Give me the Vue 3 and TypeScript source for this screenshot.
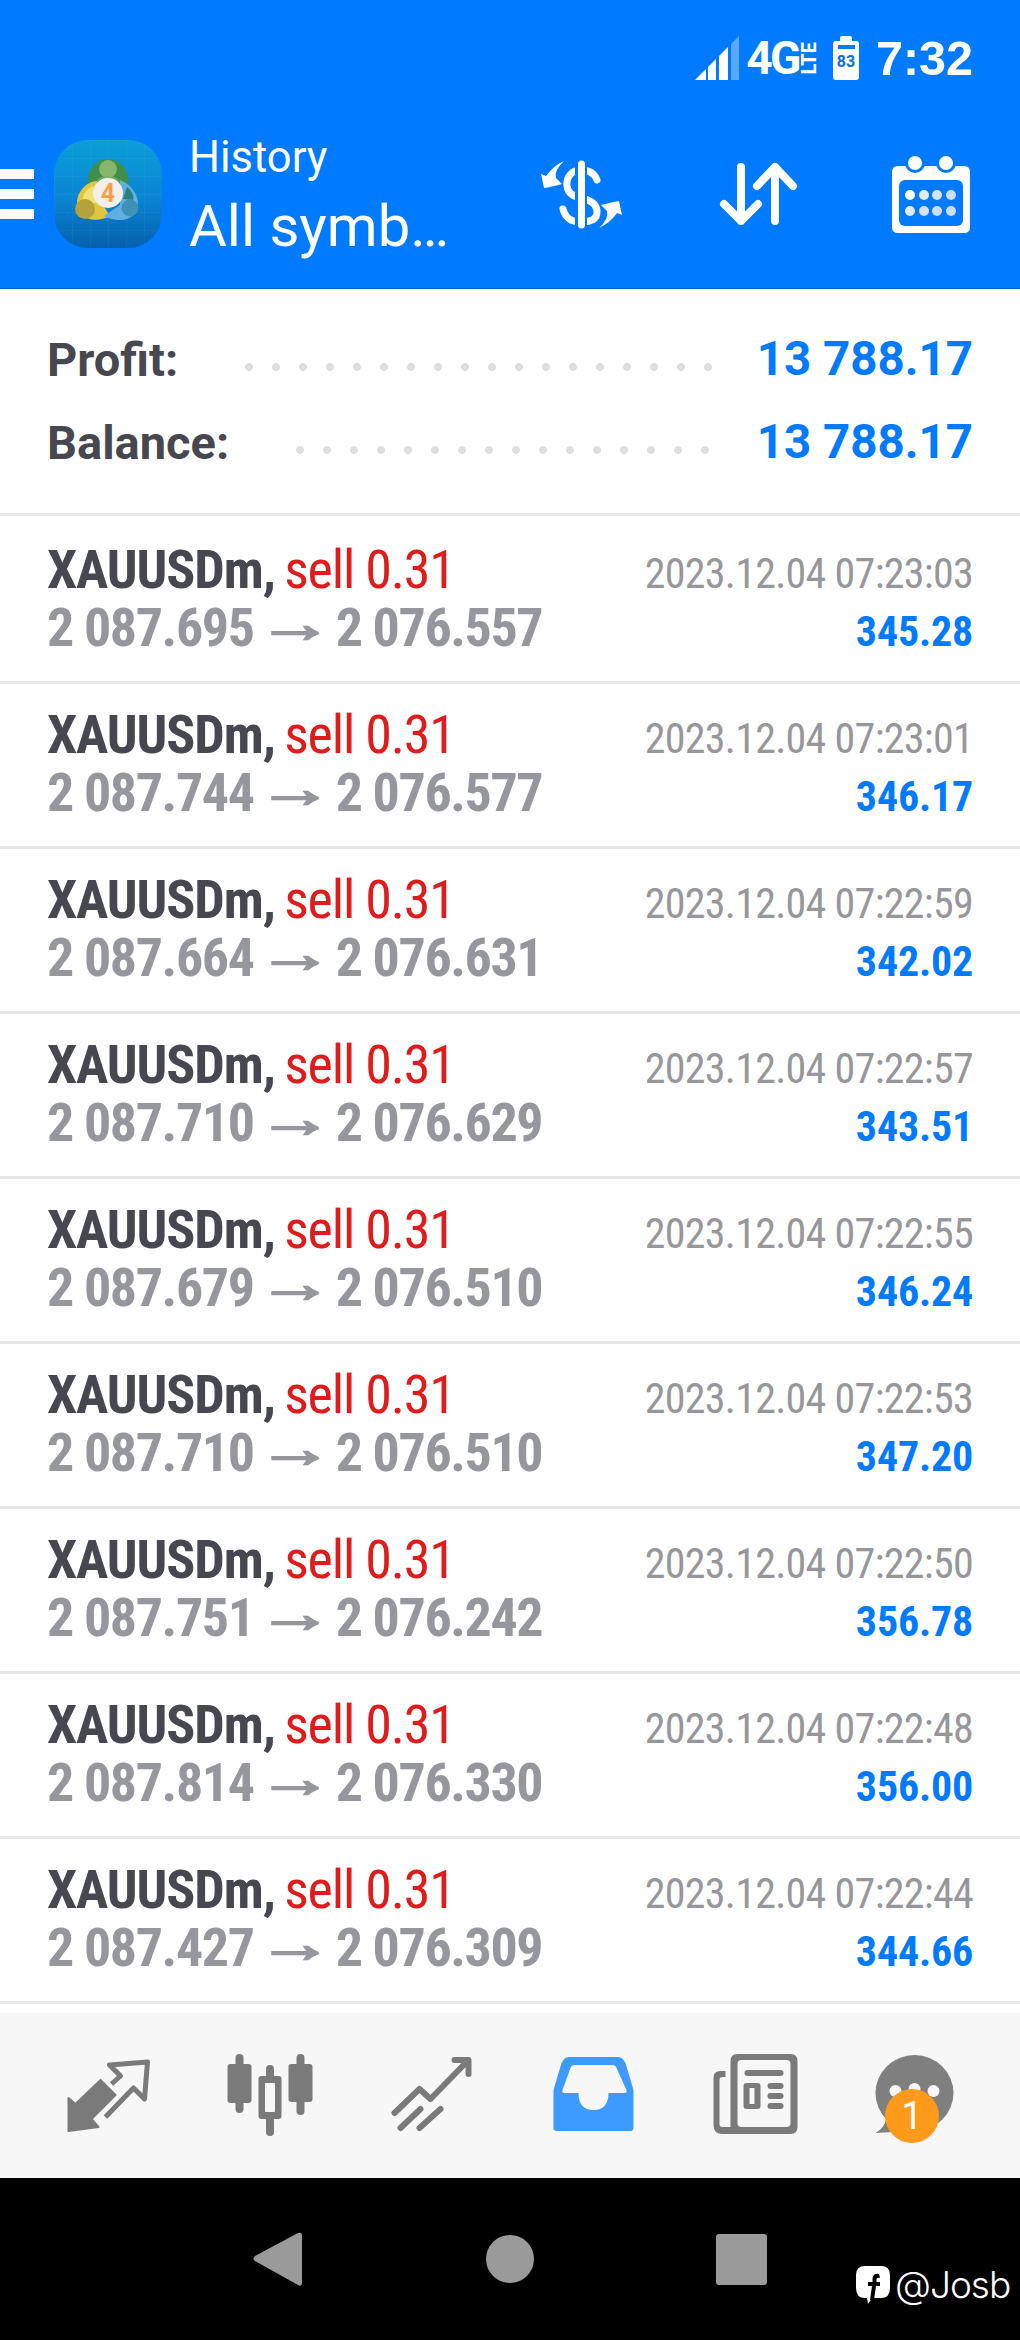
<script setup lang="ts">
interface Trade {
  open: string
  close: string
  time: string
  profit: string
}

const trades: Trade[] = [
  { open: '2 087.695', close: '2 076.557', time: '2023.12.04 07:23:03', profit: '345.28' },
  { open: '2 087.744', close: '2 076.577', time: '2023.12.04 07:23:01', profit: '346.17' },
  { open: '2 087.664', close: '2 076.631', time: '2023.12.04 07:22:59', profit: '342.02' },
  { open: '2 087.710', close: '2 076.629', time: '2023.12.04 07:22:57', profit: '343.51' },
  { open: '2 087.679', close: '2 076.510', time: '2023.12.04 07:22:55', profit: '346.24' },
  { open: '2 087.710', close: '2 076.510', time: '2023.12.04 07:22:53', profit: '347.20' },
  { open: '2 087.751', close: '2 076.242', time: '2023.12.04 07:22:50', profit: '356.78' },
  { open: '2 087.814', close: '2 076.330', time: '2023.12.04 07:22:48', profit: '356.00' },
  { open: '2 087.427', close: '2 076.309', time: '2023.12.04 07:22:44', profit: '344.66' },
]
</script>

<template>
  <div class="screen">
    <header class="header">
      <div class="status">
        <svg class="signal" viewBox="696 36 44 44" width="44" height="44">
          <polygon points="696,80 707,69 707,80" fill="#fff" />
          <polygon points="709,67 717,59 717,80 709,80" fill="#fff" />
          <polygon points="720,56 729,47 729,80 720,80" fill="#fff" />
          <polygon points="732,44 740,36 740,80 732,80" fill="#fff" fill-opacity="0.35" />
        </svg>
        <span class="net">4G</span>
        <span class="lte">LTE</span>
        <svg class="battery" viewBox="833 36 26 44" width="26" height="44">
          <path d="M840 38 q0-2 2-2 h8 q2 0 2 2 v3 h4 q3 0 3 3 v33 q0 3-3 3 h-20 q-3 0-3-3 v-33 q0-3 3-3 h4 z" fill="#fff" />
          <rect x="838" y="45" width="17" height="4" fill="#007aff" />
          <text x="846" y="67" class="batt-text" text-anchor="middle">83</text>
        </svg>
        <span class="clock">7:32</span>
      </div>
      <div class="toolbar">
        <div class="burger"><i></i><i></i><i></i></div>
        <svg class="logo" viewBox="54 140 108 108" width="108" height="108">
          <defs>
            <linearGradient id="lg" x1="0" y1="0" x2="0" y2="1">
              <stop offset="0" stop-color="#0a9ed8" />
              <stop offset="0.55" stop-color="#0a84d2" />
              <stop offset="1" stop-color="#0560ac" />
            </linearGradient>
            <pattern id="grid" x="54" y="140" width="18" height="18" patternUnits="userSpaceOnUse">
              <path d="M18 0 H0 V18" fill="none" stroke="#fff" stroke-opacity="0.07" stroke-width="1" />
            </pattern>
          </defs>
          <rect x="54" y="140" width="108" height="108" rx="34" fill="url(#lg)" />
          <rect x="54" y="140" width="108" height="108" rx="34" fill="url(#grid)" />
          <path d="M89 187 C85 172 95 159 108 159 C121 159 131 172 128 187 L108 183 Z" fill="#3f8f4b" />
          <path d="M96 186 C96 178 102 176 108 176 C114 176 120 178 120 186 Z" fill="#6fa864" />
          <circle cx="108" cy="169" r="9" fill="#86b56b" />
          <path d="M97 181 C83 182 74 197 78 209 C82 220 97 223 110 216 L100 200 Z" fill="#e0c63f" />
          <path d="M93 186 C84 190 81 198 84 203 L97 203 Z" fill="#f0df7a" />
          <circle cx="85" cy="209" r="10" fill="#b5a23a" />
          <path d="M120 180 C134 186 141 199 137 210 C132 221 117 223 104 216 L120 205 Z" fill="#5fb0de" />
          <path d="M127 187 C133 192 134 197 133 200 L123 199 Z" fill="#2b7f7a" />
          <circle cx="130" cy="208" r="8.5" fill="#3d90b6" />
          <circle cx="108" cy="193" r="15" fill="#f3f0ea" />
          <text x="108" y="202" class="logo-four" text-anchor="middle">4</text>
        </svg>
        <div class="titles">
          <span class="title-small">History</span>
          <span class="title-big">All symb…</span>
        </div>
        <svg class="tool-dollar" viewBox="540 156 86 76" width="86" height="76">
          <path d="M598 180 C595 172 588 170 582 170 C572 170 567 178 568 186 C569 194 576 197 582 198 C592 200 598 204 598 212 C598 220 590 222 582 222 C574 222 567 220 564 209" fill="none" stroke="#fff" stroke-width="7" stroke-linecap="round" />
          <line x1="582" y1="156" x2="582" y2="232" stroke="#007aff" stroke-width="12" />
          <line x1="582.5" y1="164" x2="582.5" y2="225" stroke="#fff" stroke-width="7" stroke-linecap="round" />
          <path d="M565 161 Q555 170 557 178 L563 184 Q552 187 545 188 L542 174 L547 176 Q554 166 565 161 Z" fill="#fff" />
          <path d="M565 161 Q555 170 557 178 L563 184 Q552 187 545 188 L542 174 L547 176 Q554 166 565 161 Z" fill="#fff" transform="rotate(180 582.5 194.5)" />
        </svg>
        <svg class="tool-arrows" viewBox="716 160 84 68" width="84" height="68">
          <path d="M740 167 V221 M723 204 L740 221 L757 204" fill="none" stroke="#fff" stroke-width="8" stroke-linecap="round" stroke-linejoin="round" />
          <path d="M774 221 V167 M756 186 L774 167 L792 186" fill="none" stroke="#fff" stroke-width="8" stroke-linecap="round" stroke-linejoin="round" />
        </svg>
        <svg class="tool-cal" viewBox="892 152 78 80" width="78" height="80">
          <path d="M892 170 q0-6 6-6 h66 q6 0 6 6 v55 q0 6-6 6 h-66 q-6 0-6-6 z" fill="#fff" />
          <circle cx="915" cy="161" r="10" fill="#007aff" />
          <circle cx="946" cy="161" r="10" fill="#007aff" />
          <circle cx="915" cy="161" r="7" fill="#fff" />
          <circle cx="946" cy="161" r="7" fill="#fff" />
          <rect x="899" y="178" width="64" height="46" rx="6" fill="#007aff" />
          <circle cx="910" cy="193" r="5" fill="#fff" />
          <circle cx="924" cy="193" r="5" fill="#e2ebf6" />
          <circle cx="937" cy="193" r="5" fill="#d8e3f2" />
          <circle cx="951" cy="193" r="5" fill="#cfdcf0" />
          <circle cx="910" cy="209" r="5" fill="#e2ebf6" />
          <circle cx="924" cy="209" r="5" fill="#d8e3f2" />
          <circle cx="937" cy="209" r="5" fill="#d0ddf0" />
          <circle cx="951" cy="209" r="5" fill="#cfdcf0" />
        </svg>
      </div>
    </header>

    <section class="summary">
      <div class="sum-row">
        <span class="sum-label">Profit:</span>
        <span class="leader"></span>
        <span class="sum-value">13 788.17</span>
      </div>
      <div class="sum-row">
        <span class="sum-label">Balance:</span>
        <span class="leader"></span>
        <span class="sum-value">13 788.17</span>
      </div>
    </section>

    <ul class="trades">
      <li v-for="t in trades" :key="t.time" class="trade">
        <div class="col-left">
          <div class="line-top cond"><b class="sym">XAUUSDm,</b> <span class="side">sell 0.31</span></div>
          <div class="line-price cond">{{ t.open }} <span class="arrow">→</span> {{ t.close }}</div>
        </div>
        <div class="col-right">
          <div class="time cond-r">{{ t.time }}</div>
          <div class="profit cond-r">{{ t.profit }}</div>
        </div>
      </li>
    </ul>

    <nav class="tabs">
      <div class="tab">
        <svg viewBox="57.5 2046 100 100" width="100" height="100">
          <polygon points="68,2098 75,2104 100,2080 115,2095 91,2119 98,2127 68,2131" fill="#7a7a7a" stroke="#7a7a7a" stroke-width="2" stroke-linejoin="round" />
          <polyline points="105,2117 133,2088 144,2099 147,2062 109,2065 120,2076 111,2084" fill="none" stroke="#7a7a7a" stroke-width="5" stroke-linejoin="round" />
        </svg>
      </div>
      <div class="tab">
        <svg viewBox="218.5 2046 100 100" width="100" height="100">
          <g stroke="#7a7a7a" stroke-width="8" stroke-linecap="round">
            <line x1="239" y1="2058" x2="239" y2="2109" />
            <line x1="269.5" y1="2069" x2="269.5" y2="2132" />
            <line x1="300" y1="2058" x2="300" y2="2111" />
          </g>
          <rect x="227" y="2064" width="24" height="39" rx="3" fill="#7a7a7a" />
          <rect x="258" y="2076" width="23" height="43" rx="3" fill="#7a7a7a" />
          <rect x="264.5" y="2083" width="10" height="29" rx="1" fill="#f7f7f7" />
          <rect x="288" y="2064" width="24" height="38" rx="3" fill="#7a7a7a" />
        </svg>
      </div>
      <div class="tab">
        <svg viewBox="379.5 2046 100 100" width="100" height="100">
          <g fill="none" stroke="#7a7a7a" stroke-width="6" stroke-linecap="round" stroke-linejoin="round">
            <polyline points="394,2113 419,2089 430,2099 467,2061" />
            <polyline points="454,2060 468,2060 468,2074" />
            <line x1="400" y1="2128" x2="420" y2="2109" />
            <line x1="419" y1="2128" x2="440" y2="2109" />
          </g>
        </svg>
      </div>
      <div class="tab">
        <svg viewBox="540.5 2046 100 100" width="100" height="100">
          <path fill-rule="evenodd" fill="#3d9bff" d="M568 2057 L618 2057 Q622 2057 625 2063 L633 2090 L633 2128 Q633 2131 630 2131 L556 2131 Q553 2131 553 2128 L553 2090 L561 2063 Q564 2057 568 2057 Z M574 2065 L612 2065 Q615 2065 616 2068 L626 2090 Q627 2093 624 2093 L608 2093 Q608 2110 593 2110 Q578 2110 578 2093 L564 2093 Q561 2093 562 2090 L570 2068 Q571 2065 574 2065 Z" />
        </svg>
      </div>
      <div class="tab">
        <svg viewBox="701.5 2046 100 100" width="100" height="100">
          <path fill-rule="evenodd" fill="#7a7a7a" d="M737 2054 H790 Q797 2054 797 2061 V2127 Q797 2134 790 2134 H722 Q713 2134 713 2125 V2078 Q713 2071 720 2071 H725 V2077 H722 Q719 2077 719 2080 V2124 Q719 2127 722 2127 H730 V2061 Q730 2054 737 2054 Z M741 2060 Q737 2060 737 2064 V2123 Q737 2127 741 2127 H786 Q790 2127 790 2123 V2064 Q790 2060 786 2060 Z" />
          <rect x="744" y="2070" width="39" height="6" rx="3" fill="#7a7a7a" />
          <path fill-rule="evenodd" fill="#7a7a7a" d="M746 2083 H757 Q760 2083 760 2086 V2106 Q760 2109 757 2109 H746 Q743 2109 743 2106 V2086 Q743 2083 746 2083 Z M749 2088 V2104 H754 V2088 Z" />
          <rect x="767" y="2083" width="16" height="6" rx="3" fill="#7a7a7a" />
          <rect x="767" y="2093" width="16" height="6" rx="3" fill="#7a7a7a" />
          <rect x="767" y="2103" width="16" height="6" rx="3" fill="#7a7a7a" />
        </svg>
      </div>
      <div class="tab tab-chat">
        <svg viewBox="862.5 2046 100 100" width="100" height="100">
          <ellipse cx="914" cy="2093" rx="39" ry="38" fill="#7f7f7f" />
          <path d="M886 2118 Q884 2128 875 2133 L892 2132 Z" fill="#7f7f7f" />
          <circle cx="895" cy="2091" r="6" fill="#f7f7f7" />
          <circle cx="914" cy="2089" r="6" fill="#f7f7f7" />
          <circle cx="933" cy="2091" r="6" fill="#f7f7f7" />
        </svg>
        <span class="badge">1</span>
      </div>
    </nav>

    <footer class="sysnav">
      <svg viewBox="247 2229 60 60" width="60" height="60">
        <path d="M254 2256 L297 2233 Q301 2232 301 2235 V2283 Q301 2287 297 2285 L254 2261 Q251 2259 254 2256 Z" fill="#9a9a9a" />
      </svg>
      <svg viewBox="480 2229 60 60" width="60" height="60">
        <circle cx="510" cy="2259" r="24" fill="#9a9a9a" />
      </svg>
      <svg viewBox="711 2229 60 60" width="60" height="60">
        <rect x="715" y="2234" width="51" height="51" rx="3" fill="#9a9a9a" />
      </svg>
      <div class="mark">
        <svg viewBox="0 0 36 40" width="36" height="40">
          <path d="M10 1 H26 Q35 1 35 10 V23 Q35 33 26 33 H17 L13 39 L12 33 H10 Q1 33 1 23 V10 Q1 1 10 1 Z" fill="#fff" />
          <path d="M24 9 Q18 8 17.5 14 V17 H13 V21 H17 L15 35 H19 L21 21 H25 V17 H21.5 V14 Q22 12 25 13 Z" fill="#000" />
        </svg>
        <span class="mark-text">@Josb</span>
      </div>
    </footer>
  </div>
</template>

<style>
html, body { margin: 0; padding: 0; background: #fff; }
</style>

<style scoped>
.screen {
  width: 1020px;
  height: 2340px;
  display: flex;
  flex-direction: column;
  overflow: hidden;
  background: #fff;
  font-family: Roboto, "Liberation Sans", sans-serif;
}
.header {
  box-sizing: border-box;
  height: 289px;
  background: #007aff;
  border-bottom: 1px solid #0a5fb8;
  display: flex;
  flex-direction: column;
  color: #fff;
}
.status {
  display: flex;
  align-items: center;
  justify-content: flex-end;
  height: 44px;
  margin-top: 36px;
  padding-right: 47px;
}
.signal { margin-right: 7px; }
.net {
  font: 700 46px/44px Roboto, sans-serif;
  letter-spacing: -2.5px;
  margin-right: 3px;
}
.lte {
  writing-mode: vertical-rl;
  transform: rotate(180deg);
  font: 800 20px/15px Roboto, sans-serif;
  letter-spacing: 0;
  margin-right: 16px;
}
.batt-text { font: 700 16px Roboto, sans-serif; fill: #0a6fd8; }
.battery { margin-right: 17px; }
.clock { font: 700 48.5px/44px "Liberation Sans", sans-serif; }
.logo-four { font: 700 25px Roboto, sans-serif; fill: #f2a34a; }
.toolbar {
  display: flex;
  align-items: center;
  height: 108px;
  margin-top: 60px;
}
.burger {
  width: 34px;
  display: flex;
  flex-direction: column;
  gap: 10px;
  margin-right: 20px;
}
.burger i { display: block; height: 10px; background: #fff; }
.logo { margin-right: 27px; }
.titles {
  display: flex;
  flex-direction: column;
  width: 350px;
  align-self: flex-start;
  margin-top: -7px;
}
.title-small { font: 400 43.5px/50px Roboto, sans-serif; }
.title-big { font: 400 58px/68px Roboto, sans-serif; margin-top: 9px; white-space: nowrap; }
.tool-dollar { margin-right: 92px; }
.tool-arrows { margin-right: 91px; }
.summary {
  box-sizing: border-box;
  height: 227px;
  border-bottom: 3px solid #e6e6e6;
  padding: 29px 47px 0 47px;
}
.sum-row {
  display: flex;
  align-items: center;
  height: 83px;
}
.sum-label { font: 700 47px/83px Roboto, sans-serif; color: #47484f; }
.sum-value { font: 700 47.5px/83px Roboto, sans-serif; color: #007aff; }
.leader {
  flex: 1;
  height: 8px;
  margin: 14px 44px 0 67px;
  background-image: radial-gradient(circle at 4px 4px, #dedede 3.6px, transparent 4.2px);
  background-size: 27px 8px;
  background-repeat: repeat-x;
}
.trades { list-style: none; margin: 0; padding: 0; }
.trade {
  box-sizing: border-box;
  height: 165px;
  border-bottom: 3px solid #e6e6e6;
  display: flex;
  justify-content: space-between;
  padding: 22px 47px 0 47px;
}
.trade:first-child { height: 168px; padding-top: 25px; }
.cond {
  font-stretch: 75%;
  font-size: 54px;
  line-height: 58px;
  white-space: nowrap;
}
.cond-r { font-stretch: 75%; }
.sym { font-weight: 700; color: #46474f; letter-spacing: -1.1px; }
.side { color: #e01b1b; font-weight: 400; letter-spacing: -1.2px; margin-left: -3px; }
.line-price { font-weight: 700; color: #96979c; letter-spacing: -1.4px; }
.arrow {
  display: inline-block;
  line-height: 0;
  margin: 0 3px;
  letter-spacing: 0;
  color: #96979c;
  -webkit-text-stroke: 2px #96979c;
  transform: translateY(-4px) scaleX(1.4);
}
.col-right { text-align: right; padding-top: 4px; }
.time { font-size: 42px; line-height: 58px; color: #97979b; letter-spacing: -0.7px; }
.profit { font-weight: 700; font-size: 42px; line-height: 58px; color: #007aff; letter-spacing: -0.2px; }
.tabs {
  box-sizing: border-box;
  margin-top: 9px;
  height: 165px;
  background: #f7f7f7;
  padding: 0 27px;
  display: grid;
  grid-template-columns: repeat(6, 1fr);
}
.tab {
  position: relative;
  display: flex;
  align-items: center;
  justify-content: center;
}
.badge {
  position: absolute;
  left: 53px;
  top: 76px;
  width: 54px;
  height: 54px;
  border-radius: 50%;
  background: #ff9a1a;
  color: #fff;
  font: 400 38px/54px Roboto, sans-serif;
  text-align: center;
}
.sysnav {
  flex: 1;
  background: #000;
  position: relative;
  display: flex;
  align-items: center;
  gap: 172px;
  padding-left: 248px;
}
.mark {
  position: absolute;
  left: 855px;
  top: 85px;
  display: flex;
  align-items: center;
  gap: 4px;
}
.mark-text { font: 300 37px/44px Inter, sans-serif; color: #fff; letter-spacing: -1px; }
</style>
